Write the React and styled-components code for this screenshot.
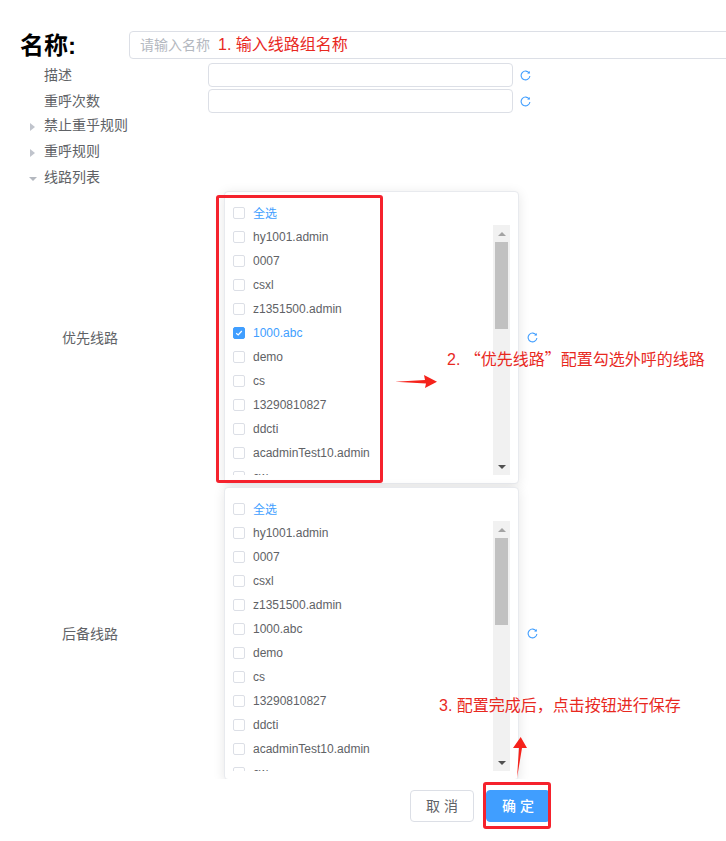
import React from "react";
import styled, { createGlobalStyle } from "styled-components";

const GlobalStyle = createGlobalStyle`
  html, body {
    margin: 0;
    padding: 0;
    background: #fff;
  }
  body {
    font-family: "Liberation Sans", "Noto Sans CJK SC", sans-serif;
  }
`;

const Page = styled.div`
  position: relative;
  width: 726px;
  height: 841px;
  box-sizing: border-box;
  padding-top: 31px;
  overflow: hidden;
  background: #fff;
`;

const Form = styled.div`
  height: 748px;
  overflow: hidden;
`;

const NameRow = styled.div`
  display: flex;
  align-items: center;
  height: 28px;
  margin-bottom: 4px;
  padding-left: 20px;
`;

const Title = styled.div`
  width: 109px;
  flex: none;
  padding-bottom: 4px;
  font-size: 24px;
  font-weight: 700;
  color: #000;
`;

const NameInput = styled.div`
  flex: none;
  width: 640px;
  height: 28px;
  box-sizing: border-box;
  padding-left: 10px;
  border: 1px solid #dcdfe6;
  border-radius: 4px;
  font-size: 14px;
  line-height: 26px;
  color: #b4b8bf;
`;

const FieldRow = styled.div`
  display: flex;
  align-items: center;
  height: 24px;
  padding-left: 44px;
  & + & {
    margin-top: 2px;
  }
`;

const Label = styled.div`
  width: 164px;
  flex: none;
  padding-bottom: 2px;
  font-size: 14px;
  color: #606266;
`;

const TextBox = styled.div`
  width: 305px;
  height: 24px;
  flex: none;
  box-sizing: border-box;
  border: 1px solid #dcdfe6;
  border-radius: 4px;
  background: #fff;
`;

const RefreshIcon = styled.svg`
  flex: none;
  width: 11px;
  height: 11px;
  margin-left: ${(p) => p.$gap || 7}px;
  fill: none;
  stroke: #409eff;
  stroke-width: 1.1;
`;

const CollapseRow = styled.div`
  display: flex;
  align-items: center;
  height: 26px;
  box-sizing: border-box;
  padding: 0 0 4px 30px;
  font-size: 14px;
  color: #606266;
`;

const Caret = styled.span`
  width: 14px;
  flex: none;
  display: flex;
  align-items: center;
  &::before {
    content: "";
    display: block;
    width: 0;
    height: 0;
    border-style: solid;
    border-color: transparent;
    margin-top: 6px;
    ${(p) =>
      p.$open
        ? `border-width: 4px 4px 0 4px; border-top-color: #b4b8bf; margin-left: -1px;`
        : `border-width: 4px 0 4px 5px; border-left-color: #c0c4cc;`}
  }
`;

const PickerRow = styled.div`
  display: flex;
  align-items: center;
  height: 293px;
  margin-bottom: 3px;
  padding-left: 62px;
`;

const PickerLabel = styled(Label)`
  width: 162px;
`;

const Panel = styled.div`
  flex: none;
  width: 295px;
  height: 293px;
  box-sizing: border-box;
  padding: 9px 8px 8px;
  border: 1px solid #e8eaee;
  border-radius: 4px;
  background: #fff;
  box-shadow: 0 2px 12px rgba(0, 0, 0, 0.1);
`;

const PanelBody = styled.div`
  display: flex;
  height: 250px;
`;

const List = styled.div`
  width: 260px;
  flex: none;
  height: 250px;
  overflow: hidden;
`;

const Item = styled.div`
  display: flex;
  align-items: center;
  gap: 8px;
  height: 24px;
  font-size: 12px;
  color: ${(p) => (p.$active ? "#409eff" : "#606266")};
`;

const AllText = styled.span`
  padding-bottom: 2px;
`;

const Check = styled.span`
  width: 12px;
  height: 12px;
  flex: none;
  box-sizing: border-box;
  display: flex;
  align-items: center;
  justify-content: center;
  border: 1px solid ${(p) => (p.$checked ? "#409eff" : "#dcdfe6")};
  border-radius: 2px;
  background: ${(p) => (p.$checked ? "#409eff" : "#fff")};
`;

const ScrollTrack = styled.div`
  width: 17px;
  flex: none;
  box-sizing: border-box;
  padding: 0 2px;
  display: flex;
  flex-direction: column;
  align-items: center;
  background: #f1f1f1;
`;

const ScrollArrow = styled.span`
  flex: none;
  height: 17px;
  display: flex;
  align-items: center;
  justify-content: center;
  &::before {
    content: "";
    width: 0;
    height: 0;
    border-style: solid;
    border-color: transparent;
    ${(p) =>
      p.$down
        ? `border-width: 4px 4px 0 4px; border-top-color: #505050;`
        : `border-width: 0 4px 4px 4px; border-bottom-color: #a3a3a3;`}
  }
`;

const ScrollThumb = styled.div`
  width: 13px;
  height: 87px;
  flex: none;
  background: #c1c1c1;
`;

const ScrollGap = styled.div`
  flex: 1;
`;

const Footer = styled.div`
  display: flex;
  gap: 12px;
  padding: 11px 0 0 410px;
`;

const Button = styled.div`
  width: 64px;
  height: 32px;
  box-sizing: border-box;
  border: 1px solid ${(p) => (p.$primary ? "#409eff" : "#dcdfe6")};
  border-radius: 4px;
  background: ${(p) => (p.$primary ? "#409eff" : "#fff")};
  color: ${(p) => (p.$primary ? "#fff" : "#606266")};
  font-size: 14px;
  font-weight: ${(p) => (p.$primary ? 500 : 400)};
  line-height: 30px;
  text-align: center;
  white-space: pre;
`;

const Note = styled.div`
  position: absolute;
  left: ${(p) => p.$x}px;
  top: ${(p) => p.$y}px;
  font-size: 16px;
  line-height: 22px;
  color: #e8291f;
  white-space: nowrap;
`;

const Quote = styled.span`
  font-family: "Noto Sans CJK SC", sans-serif;
`;

const RedBox = styled.div`
  position: absolute;
  left: ${(p) => p.$x}px;
  top: ${(p) => p.$y}px;
  width: ${(p) => p.$w}px;
  height: ${(p) => p.$h}px;
  box-sizing: border-box;
  border: 3px solid #f5222d;
  border-radius: 3px;
`;

const ArrowLayer = styled.svg`
  position: absolute;
  left: 0;
  top: 0;
  width: 726px;
  height: 841px;
  pointer-events: none;
`;

const lines = [
  "hy1001.admin",
  "0007",
  "csxl",
  "z1351500.admin",
  "1000.abc",
  "demo",
  "cs",
  "13290810827",
  "ddcti",
  "acadminTest10.admin",
  "cw",
];

const Refresh = ({ gap }) => (
  <RefreshIcon viewBox="0 0 11 11" $gap={gap}>
    <path d="M9.3 3.2A4.4 4.4 0 1 0 9.9 6" />
    <path d="M9.8 0.9v2.7H7.1" fill="#409eff" stroke="none" />
  </RefreshIcon>
);

const Picker = ({ label, checked }) => (
  <PickerRow>
    <PickerLabel>{label}</PickerLabel>
    <Panel>
      <Item $active>
        <Check />
        <AllText>全选</AllText>
      </Item>
      <PanelBody>
        <List>
          {lines.map((line) => (
            <Item key={line} $active={line === checked}>
              <Check $checked={line === checked}>
                {line === checked && (
                  <svg width="8" height="8" viewBox="0 0 8 8" fill="none" stroke="#fff" strokeWidth="1.2">
                    <path d="M1.2 4.2 3.2 6 6.8 2" />
                  </svg>
                )}
              </Check>
              {line}
            </Item>
          ))}
        </List>
        <ScrollTrack>
          <ScrollArrow />
          <ScrollThumb />
          <ScrollGap />
          <ScrollArrow $down />
        </ScrollTrack>
      </PanelBody>
    </Panel>
    <Refresh gap={8} />
  </PickerRow>
);

const App = () => {
  return (
    <Page>
      <GlobalStyle />
      <Form>
        <NameRow>
          <Title>名称:</Title>
          <NameInput>请输入名称</NameInput>
        </NameRow>
        <FieldRow>
          <Label>描述</Label>
          <TextBox />
          <Refresh />
        </FieldRow>
        <FieldRow>
          <Label>重呼次数</Label>
          <TextBox />
          <Refresh />
        </FieldRow>
        <CollapseRow>
          <Caret />
          禁止重乎规则
        </CollapseRow>
        <CollapseRow>
          <Caret />
          重呼规则
        </CollapseRow>
        <CollapseRow>
          <Caret $open />
          线路列表
        </CollapseRow>
        <Picker label="优先线路" checked="1000.abc" />
        <Picker label="后备线路" />
      </Form>
      <Footer>
        <Button>取 消</Button>
        <Button $primary>确 定</Button>
      </Footer>

      <Note $x={218} $y={34}>1. 输入线路组名称</Note>
      <Note $x={447} $y={347}>2. <Quote>“</Quote>优先线路<Quote>”</Quote>配置勾选外呼的线路</Note>
      <Note $x={439} $y={695}>3. 配置完成后，点击按钮进行保存</Note>
      <RedBox $x={216} $y={195} $w={167} $h={288} />
      <RedBox $x={483} $y={782} $w={68} $h={47} />
      <ArrowLayer viewBox="0 0 726 841">
        <polygon points="395,381.7 425,380 424,375 437,381.7 425,388 426,383.4" fill="#f5221b" />
        <polygon points="517,778 519,748 513,748 520.7,737 527,748 522,748" fill="#f5221b" />
      </ArrowLayer>
    </Page>
  );
};

export default App;
